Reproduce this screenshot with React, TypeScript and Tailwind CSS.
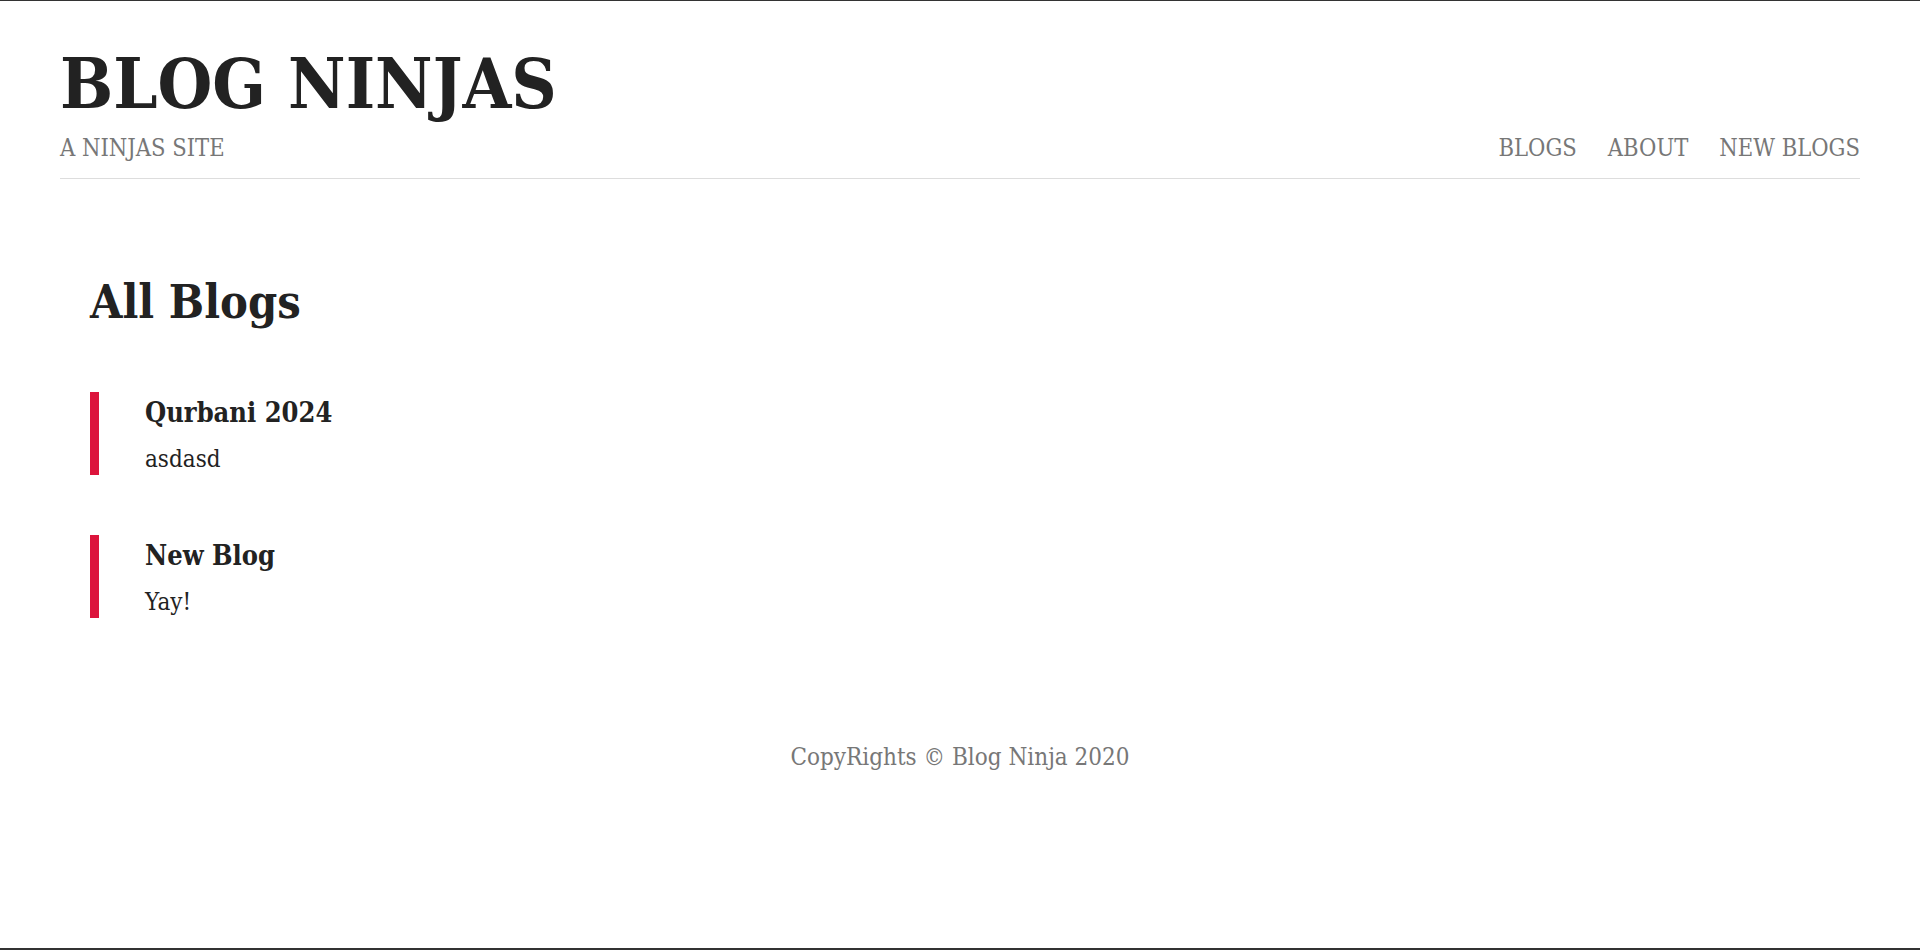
const blogs = [
  { title: 'Qurbani 2024', snippet: 'asdasd' },
  { title: 'New Blog', snippet: 'Yay!' },
]

const serif = "font-['DejaVu_Serif_Condensed','DejaVu_Serif',serif]"

export default function App() {
  return (
    <div className={`${serif} min-h-screen flex flex-col bg-white border-t border-[#333] text-[#222]`}>
      <header className="mx-[60px] pt-[48px] pb-[17px] flex justify-between items-end border-b border-[#ddd]">
        <div>
          <h1 className="text-[70px] font-bold leading-none">BLOG NINJAS</h1>
          <p className="mt-[18px] text-[23.5px] leading-none uppercase text-[#777]">A Ninjas Site</p>
        </div>
        <nav className="flex gap-[31px] text-[23.5px] leading-none uppercase text-[#777]">
          <a href="#">Blogs</a>
          <a href="#">About</a>
          <a href="#">New Blogs</a>
        </nav>
      </header>

      <main className="px-[90px] pt-[100px]">
        <h2 className="text-[46.5px] font-bold leading-none">All Blogs</h2>
        <div className="mt-[67px] flex flex-col gap-[60px]">
          {blogs.map((b) => (
            <div key={b.title} className="border-l-[9px] border-[#dc143c] pl-[46px] pt-[7px] h-[83px]">
              <h3 className="text-[27px] font-bold leading-none">{b.title}</h3>
              <p className="mt-[21px] text-[24px] leading-none">{b.snippet}</p>
            </div>
          ))}
        </div>
      </main>

      <footer className="pt-[127px] text-center text-[24px] leading-none text-[#777]">
        CopyRights © Blog Ninja 2020
      </footer>

      <div className="mt-auto h-[2px] bg-[#333]" />
    </div>
  )
}
